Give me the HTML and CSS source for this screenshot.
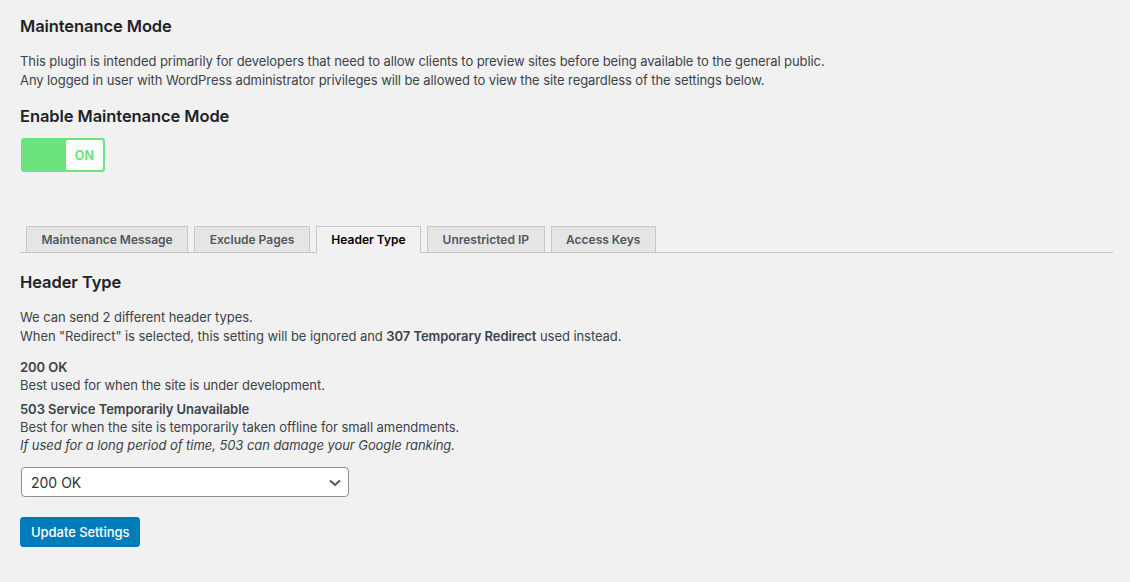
FILE: index.html
```html
<!DOCTYPE html>
<html lang="en">
<head>
<meta charset="utf-8">
<title>Maintenance Mode</title>
<link rel="stylesheet" href="styles.css">
</head>
<body>
<div class="wrap">
  <h1 class="page-title">Maintenance Mode</h1>
  <p class="intro">This plugin is intended primarily for developers that need to allow clients to preview sites before being available to the general public.<br>Any logged in user with WordPress administrator privileges will be allowed to view the site regardless of the settings below.</p>

  <h2 class="section-title">Enable Maintenance Mode</h2>
  <div class="toggle">
    <span class="toggle-track"></span>
    <span class="toggle-knob">ON</span>
  </div>

  <nav class="nav-tabs">
    <span class="nav-tab">Maintenance Message</span>
    <span class="nav-tab">Exclude Pages</span>
    <span class="nav-tab nav-tab-active">Header Type</span>
    <span class="nav-tab">Unrestricted IP</span>
    <span class="nav-tab">Access Keys</span>
  </nav>

  <h2 class="tab-title">Header Type</h2>
  <p class="desc">We can send 2 different header types.<br>When "Redirect" is selected, this setting will be ignored and <strong>307 Temporary Redirect</strong> used instead.</p>

  <p class="option"><strong>200 OK</strong><br>Best used for when the site is under development.</p>
  <p class="option option-second"><strong>503 Service Temporarily Unavailable</strong><br>Best for when the site is temporarily taken offline for small amendments.<br><em>If used for a long period of time, 503 can damage your Google ranking.</em></p>

  <div class="select-wrap">
    <select class="select">
      <option>200 OK</option>
      <option>503 Service Temporarily Unavailable</option>
    </select>
    <svg class="chevron" width="12" height="8" viewBox="0 0 12 8" aria-hidden="true"><path d="M1 1.5 L6 6 L11 1.5" fill="none" stroke="#50575e" stroke-width="2"/></svg>
  </div>

  <button class="button-primary" type="button">Update Settings</button>
</div>
</body>
</html>
```
FILE: styles.css
```css
html, body {
  margin: 0;
  padding: 0;
  background: #f1f1f1;
}
body {
  font-family: Inter, "Liberation Sans", sans-serif;
  font-size: 13px;
  color: #3c434a;
  letter-spacing: -0.06px;
}
.wrap {
  padding: 0 17px 0 20px;
  display: flex;
  flex-direction: column;
  align-items: flex-start;
}
.page-title,
.section-title,
.tab-title {
  font-size: 16.5px;
  font-weight: 600;
  line-height: 22px;
  color: #1d2327;
  margin: 0;
  letter-spacing: -0.08px;
}
.page-title { margin-top: 15px; }
.intro {
  margin: 15px 0 0;
  line-height: 19px;
  letter-spacing: -0.09px;
}
.section-title { margin-top: 15px; }

.toggle {
  margin: 11px 0 0 1px;
  width: 84px;
  height: 34px;
  box-sizing: border-box;
  padding: 2px;
  background: #6be47b;
  border-radius: 3px;
  display: flex;
  justify-content: flex-end;
}
.toggle-track { flex: 1; }
.toggle-knob {
  width: 37px;
  background: #fff;
  border-radius: 2px;
  color: #6be47b;
  font-weight: 700;
  font-size: 12.5px;
  display: flex;
  align-items: center;
  justify-content: center;
  letter-spacing: 0.2px;
}

.nav-tabs {
  margin-top: 54px;
  align-self: stretch;
  display: flex;
  gap: 6px;
  padding-left: 6px;
  border-bottom: 1px solid #c3c4c7;
}
.nav-tab {
  height: 26px;
  box-sizing: border-box;
  border: 1px solid #c8c8c8;
  border-bottom: 0;
  background: #e5e5e5;
  color: #50575e;
  font-size: 12px;
  font-weight: 600;
  padding: 0 14.5px;
  display: flex;
  align-items: center;
  letter-spacing: 0;
}
.nav-tab-active {
  background: #f1f1f1;
  color: #000;
  margin-bottom: -1px;
  height: 27px;
  padding-bottom: 1px;
}

.tab-title { margin-top: 18px; }
.desc {
  margin: 15px 0 0;
  line-height: 19px;
}
.option {
  margin: 12px 0 0;
  line-height: 18px;
}
.option-second { margin-top: 6px; }
strong { font-weight: 600; }

.select-wrap {
  position: relative;
  margin: 13px 0 0 1px;
}
.select {
  appearance: none;
  -webkit-appearance: none;
  width: 328px;
  height: 30px;
  box-sizing: border-box;
  border: 1px solid #8c8f94;
  border-radius: 4px;
  background: #fff;
  padding: 0 24px 0 9px;
  font-family: Inter, "Liberation Sans", sans-serif;
  font-size: 14px;
  color: #2c3338;
  margin: 0;
  display: block;
}
.chevron {
  position: absolute;
  right: 8px;
  top: 12px;
  pointer-events: none;
}

.button-primary {
  margin-top: 20px;
  height: 30px;
  padding: 0 10px;
  background: #007cba;
  border: 1px solid #007cba;
  border-radius: 3px;
  color: #fff;
  font-family: Inter, "Liberation Sans", sans-serif;
  font-size: 13px;
  font-weight: 500;
  letter-spacing: -0.05px;
  cursor: pointer;
}
```
